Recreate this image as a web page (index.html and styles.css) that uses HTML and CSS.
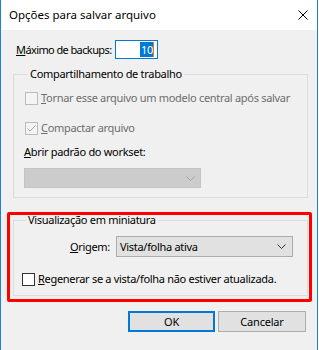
FILE: index.html
```html
<!DOCTYPE html>
<html lang="pt">
<head>
<meta charset="utf-8">
<title>Opções para salvar arquivo</title>
<link rel="stylesheet" href="styles.css">
</head>
<body>
<div class="window">
  <div class="titlebar">
    <span class="title">Opções para salvar arquivo</span>
    <span class="close">
      <svg width="10" height="10" viewBox="0 0 10 10"><path d="M0.5 0.5 L9.5 9.5 M9.5 0.5 L0.5 9.5" stroke="#000" stroke-width="1" fill="none"/></svg>
    </span>
  </div>
  <div class="content">
    <div class="backups-row">
      <span class="backups-label"><u>M</u>áximo de backups:</span>
      <span class="spin"><span class="sel">10</span><span class="caret"></span></span>
    </div>

    <fieldset class="group group-work">
      <legend>Compartilhamento de trabalho</legend>
      <div class="check-row disabled first">
        <span class="box"></span>
        <span><u>T</u>ornar esse arquivo um modelo central após salvar</span>
      </div>
      <div class="check-row disabled second">
        <span class="box">
          <svg width="11" height="11" viewBox="0 0 11 11"><path d="M1.5 5.5 L4 8 L9.5 2.5" stroke="#a8a8a8" stroke-width="1" fill="none"/></svg>
        </span>
        <span><u>C</u>ompactar arquivo</span>
      </div>
      <div class="plain-label"><u>A</u>brir padrão do workset:</div>
      <div class="combo combo-disabled">
        <span></span>
        <svg width="9" height="5" viewBox="0 0 9 5"><path d="M0.5 0.5 L4.5 4.5 L8.5 0.5" stroke="#a6a6a6" stroke-width="1" fill="none"/></svg>
      </div>
    </fieldset>

    <fieldset class="group group-thumb">
      <legend>Visualização em miniatura</legend>
      <div class="origin-row">
        <span class="origin-label"><u>O</u>rigem:</span>
        <div class="combo combo-active">
          <span>Vista/folha ativa</span>
          <svg width="9" height="5" viewBox="0 0 9 5"><path d="M0.5 0.5 L4.5 4.5 L8.5 0.5" stroke="#333" stroke-width="1" fill="none"/></svg>
        </div>
      </div>
      <div class="check-row regen">
        <span class="box box-on"></span>
        <span><u>R</u>egenerar se a vista/folha não estiver atualizada.</span>
      </div>
    </fieldset>

    <div class="buttons">
      <button class="btn btn-default">OK</button>
      <button class="btn btn-cancel">Cancelar</button>
    </div>
  </div>
  <div class="highlight"></div>
</div>
</body>
</html>
```

FILE: styles.css
```css
* { box-sizing: border-box; }
html, body { margin: 0; padding: 0; background: #ffffff; }
body {
  font-family: "Noto Sans", "Open Sans", sans-serif;
  font-size: 11px;
  letter-spacing: -0.3px;
  color: #000;
}
.window {
  position: relative;
  width: 318px;
  height: 350px;
  background: #f0f0f0;
  border-left: 1px solid #1883d7;
  border-right: 1px solid #1883d7;
  overflow: hidden;
}
.titlebar {
  height: 30px;
  background: #ffffff;
  display: flex;
  align-items: center;
  justify-content: space-between;
  padding-left: 8px;
  padding-right: 9px;
}
.title { font-size: 11.5px; letter-spacing: 0; line-height: 16px; }
.close { display: flex; width: 10px; height: 10px; }

.content {
  padding: 0 9px 0 12px;
}
.backups-row {
  margin-top: 10px;
  height: 19px;
  display: flex;
  align-items: center;
  padding-left: 3px;
}
.backups-label {
  flex: none;
  width: 99px;
  line-height: 16px;
  white-space: nowrap;
  letter-spacing: -0.6px;
}
.spin {
  width: 43px;
  height: 19px;
  border: 1px solid #0078d7;
  background: #fff;
  display: flex;
  justify-content: flex-end;
  align-items: center;
  padding-right: 3px;
  flex: none;
}
.sel {
  background: #0078d7;
  color: #fff;
  line-height: 15px;
  padding: 0 0 0 1px;
}
.caret { width: 1px; height: 15px; background: #f07800; }

.group {
  margin: 0;
  padding: 0 0 0 10px;
  border: 1px solid #dcdcdc;
  width: 295px;
  min-width: 0;
}
.group legend {
  padding: 0 2px;
  margin-left: 4px;
  line-height: 14px;
  height: 14px;
}
.group-work {
  margin-top: 8px;
  padding-bottom: 9px;
}
.group-thumb {
  margin-top: 15px;
  padding-left: 8px;
  padding-bottom: 8px;
}
.check-row {
  display: flex;
  align-items: center;
  height: 16px;
  line-height: 16px;
  white-space: nowrap;
}
.check-row .box {
  flex: none;
  width: 13px;
  height: 13px;
  border: 1px solid #bcbcbc;
  background: #f4f4f4;
  margin-right: 3px;
  display: flex;
  align-items: center;
  justify-content: center;
}
.check-row.disabled { color: #6d6d6d; margin-left: 1px; }
.check-row.first { margin-top: 9px; }
.check-row.second { margin-top: 14px; }
.check-row .box-on { border-color: #333333; background: #ffffff; margin-right: 3px; }
.plain-label { margin-top: 8px; line-height: 16px; height: 16px; }
.combo {
  display: flex;
  align-items: center;
  justify-content: space-between;
  flex: none;
}
.combo-disabled {
  margin-top: 8px;
  width: 177px;
  height: 20px;
  background: #cccccc;
  border: 1px solid #c4c4c4;
  padding-right: 5px;
}
.origin-row {
  display: flex;
  align-items: center;
  margin-top: 9px;
}
.origin-label {
  width: 88px;
  text-align: right;
  margin-right: 6px;
  line-height: 16px;
}
.combo-active {
  width: 177px;
  height: 21px;
  background: #e1e1e1;
  border: 1px solid #adadad;
  padding: 0 6px 0 3px;
  line-height: 16px;
}
.regen { margin-top: 14px; }

.buttons {
  display: flex;
  justify-content: flex-end;
  gap: 3px;
  margin-top: 15px;
  padding-right: 2px;
}
.btn {
  font-family: inherit;
  font-size: 11px;
  letter-spacing: -0.2px;
  color: #000;
  height: 21px;
  background: #e1e1e1;
  border: 1px solid #adadad;
  padding: 0;
  line-height: 16px;
}
.btn-default { width: 87px; border: 2px solid #0078d7; }
.btn-cancel { width: 88px; }

.highlight {
  position: absolute;
  left: 6px;
  top: 212px;
  width: 305px;
  height: 90px;
  border: 3px solid #ff0000;
  border-radius: 2px;
  pointer-events: none;
}
```
